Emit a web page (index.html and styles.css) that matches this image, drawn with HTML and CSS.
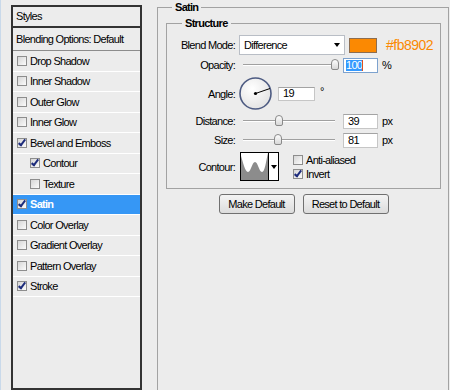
FILE: index.html
```html
<!DOCTYPE html>
<html lang="en">

<head>
  <meta charset="UTF-8">
  <title>Layer Style - Satin</title>
  <link rel="stylesheet" href="styles.css">
</head>

<body>
  <div class="styles-panel">
    <div class="panel-head">Styles</div>
    <div class="panel-sub">Blending Options: Default</div>
    <ul class="fx-list">
      <li><span class="cb"></span>Drop Shadow</li>
      <li><span class="cb"></span>Inner Shadow</li>
      <li><span class="cb"></span>Outer Glow</li>
      <li><span class="cb"></span>Inner Glow</li>
      <li><span class="cb on"></span>Bevel and Emboss</li>
      <li class="sub"><span class="cb on"></span>Contour</li>
      <li class="sub"><span class="cb"></span>Texture</li>
      <li class="active"><span class="cb on"></span>Satin</li>
      <li><span class="cb"></span>Color Overlay</li>
      <li><span class="cb"></span>Gradient Overlay</li>
      <li><span class="cb"></span>Pattern Overlay</li>
      <li><span class="cb on"></span>Stroke</li>
    </ul>
  </div>

  <fieldset class="satin">
    <legend>Satin</legend>

    <fieldset class="structure">
      <legend>Structure</legend>

      <div class="row row-blend">
        <label>Blend Mode:</label>
        <div class="select">
          <span>Difference</span>
          <span class="arrow"></span>
        </div>
        <span class="swatch"></span>
        <span class="hex">#fb8902</span>
      </div>

      <div class="row row-num">
        <label>Opacity:</label>
        <div class="slider"><span class="thumb" style="left: 92px"></span></div>
        <div class="num focus"><span class="sel">100</span><span class="caret"></span></div>
        <span class="unit">%</span>
      </div>

      <div class="row row-angle">
        <label>Angle:</label>
        <svg class="dial" width="33" height="33" viewBox="0 0 33 33">
          <defs>
            <radialGradient id="dialFill" cx="40%" cy="35%" r="70%">
              <stop offset="0" stop-color="#ffffff" />
              <stop offset="1" stop-color="#e2e2e2" />
            </radialGradient>
          </defs>
          <circle cx="16.5" cy="16.5" r="15.5" fill="url(#dialFill)" stroke="#4d5b82" stroke-width="1.6" />
          <line x1="16.5" y1="16.5" x2="31" y2="11.5" stroke="#000" stroke-width="1" />
          <circle cx="16.5" cy="16.5" r="1.6" fill="#000" />
        </svg>
        <div class="num angle">19</div>
        <span class="deg">°</span>
      </div>

      <div class="row row-num">
        <label>Distance:</label>
        <div class="slider"><span class="thumb" style="left: 36px"></span></div>
        <div class="num">39</div>
        <span class="unit">px</span>
      </div>

      <div class="row row-num">
        <label>Size:</label>
        <div class="slider"><span class="thumb" style="left: 35px"></span></div>
        <div class="num">81</div>
        <span class="unit">px</span>
      </div>

      <div class="row row-contour">
        <label>Contour:</label>
        <div class="contour">
          <svg width="27" height="27" viewBox="0 0 27 27">
            <path d="M0 3 C2 9 4 19 7 19 C10 19 11 9 14 9 C17 9 18 19 21 19 C24 19 25 8 27 0 V27 H0 Z" fill="#8c8c8c" />
          </svg>
          <span class="c-drop"><span class="arrow"></span></span>
        </div>
        <div class="checks">
          <div class="check"><span class="cb"></span>Anti-aliased</div>
          <div class="check"><span class="cb on"></span>Invert</div>
        </div>
      </div>
    </fieldset>

    <div class="buttons">
      <button class="btn-make">Make Default</button>
      <button class="btn-reset">Reset to Default</button>
    </div>
  </fieldset>
</body>

</html>
```

FILE: styles.css
```css
body {
  margin: 0;
  height: 390px;
  overflow: hidden;
  display: flex;
  align-items: flex-start;
  background: #ececec;
  border-left: 1px solid #c9d9ea;
  font-family: "Liberation Sans", Arial, sans-serif;
  font-size: 11px;
  letter-spacing: -0.7px;
  color: #000;
}

/* left list of effects */
.styles-panel {
  margin: 5px 0 0 10px;
  width: 131px;
  height: 385px;
  box-sizing: border-box;
  border: 2px solid #333;
  display: flex;
  flex-direction: column;
}

.panel-head {
  height: 19px;
  line-height: 19px;
  padding-left: 3px;
  border-bottom: 2px solid #333;
}

.panel-sub {
  height: 22px;
  line-height: 22px;
  padding-left: 3px;
  border-bottom: 1px solid #8c8c8c;
}

.fx-list {
  list-style: none;
  margin: 0;
  padding: 0;
}

.fx-list li {
  height: 19.5px;
  display: flex;
  align-items: center;
  padding-left: 4px;
  border-bottom: 1px solid #fff;
}

.fx-list li.sub {
  padding-left: 17px;
}

.fx-list li.active {
  background: #3697f5;
  color: #fff;
  font-weight: bold;
}

.cb {
  position: relative;
  flex: none;
  width: 10px;
  height: 10px;
  box-sizing: border-box;
  margin-right: 3px;
  border: 1px solid #8d8d8d;
  background: linear-gradient(135deg, #d6d6d6, #fbfbfb);
}

.cb.on::after {
  content: "";
  position: absolute;
  left: 2px;
  top: -1px;
  width: 2px;
  height: 6px;
  border: solid #1d2c7c;
  border-width: 0 2px 2px 0;
  transform: rotate(38deg);
}

/* right side */
fieldset {
  margin: 0;
  border: 1px solid #a2a2a2;
  min-width: 0;
}

legend {
  font-weight: bold;
  line-height: 15px;
  padding: 0 3px;
}

.satin {
  margin-left: 15px;
  width: 292px;
  height: 390px;
  box-sizing: border-box;
  border-bottom: none;
  padding: 0 7px 0 8px;
}

.satin > legend {
  margin-left: 6px;
}

.structure {
  margin-top: 1px;
  padding: 4px 0 7px 0;
}

.structure > legend {
  margin-left: 15px;
}

.row {
  display: flex;
  align-items: center;
}

.row label {
  width: 68px;
  flex: none;
  text-align: right;
  margin-right: 4px;
}

.row-blend {
  height: 20px;
}

.row-num {
  height: 14px;
  margin-top: 5px;
}

.row-blend + .row-num {
  margin-top: 3px;
}

.row-angle {
  height: 33px;
  margin-top: 5px;
}

.row-angle + .row-num {
  margin-top: 4px;
}

.row-contour {
  height: 29px;
  margin-top: 5px;
}

.select {
  width: 106px;
  height: 20px;
  box-sizing: border-box;
  border: 1px solid #b9bec6;
  background: #fff;
  display: flex;
  align-items: center;
  padding: 0 4px 0 4px;
  justify-content: space-between;
}

.arrow {
  width: 0;
  height: 0;
  border-left: 3px solid transparent;
  border-right: 3px solid transparent;
  border-top: 4px solid #000;
}

.swatch {
  width: 28px;
  height: 15px;
  box-sizing: border-box;
  margin-left: 4px;
  border: 1px solid #8c6d50;
  background: #fb8902;
}

.hex {
  margin-left: 9px;
  font-size: 14px;
  letter-spacing: -0.5px;
  color: #fb8902;
}

.slider {
  position: relative;
  width: 100px;
  height: 14px;
  margin-right: 4px;
}

.slider::before {
  content: "";
  position: absolute;
  left: 4px;
  right: 4px;
  top: 6px;
  height: 1px;
  background: #a0a0a0;
  border-bottom: 1px solid #fff;
}

.thumb {
  position: absolute;
  top: 1px;
  width: 8px;
  height: 11px;
  box-sizing: border-box;
  border: 1px solid #8a8a8a;
  border-radius: 4px 4px 2px 2px;
  background: linear-gradient(#fdfdfd, #d8d8d8);
}

.num {
  width: 35px;
  height: 15px;
  box-sizing: border-box;
  border: 1px solid #c6c6c6;
  border-top-color: #a3a3a3;
  background: #fff;
  padding-left: 4px;
  line-height: 13px;
  display: flex;
  align-items: center;
}

.num.focus {
  border-color: #7da2ce;
  padding-left: 2px;
}

.sel {
  background: #3399ff;
  color: #fff;
  line-height: 11px;
}

.caret {
  width: 1px;
  height: 11px;
  background: #e05020;
}

.num.angle {
  width: 37px;
  height: 14px;
  margin-left: 6px;
}

.unit {
  margin-left: 4px;
}

.deg {
  margin-left: 5px;
  align-self: flex-start;
  margin-top: 8px;
}

.dial {
  flex: none;
}

.contour {
  display: flex;
  margin-left: 1px;
  border: 1px solid #000;
  background: #fff;
}

.contour svg {
  display: block;
}

.c-drop {
  width: 9px;
  border-left: 1px solid #000;
  display: flex;
  align-items: center;
  justify-content: center;
}

.checks {
  margin-left: 14px;
  display: flex;
  flex-direction: column;
}

.check {
  height: 14px;
  display: flex;
  align-items: center;
}

.buttons {
  display: flex;
  justify-content: center;
  gap: 8px;
  margin-top: 5px;
}

.buttons button {
  height: 20px;
  padding: 0;
  border: 1px solid #707070;
  border-radius: 3px;
  background: linear-gradient(#f4f4f4, #dcdcdc);
  font-family: inherit;
  font-size: 11px;
  letter-spacing: -0.7px;
  color: #000;
}

.btn-make {
  width: 76px;
}

.btn-reset {
  width: 86px;
}
```
